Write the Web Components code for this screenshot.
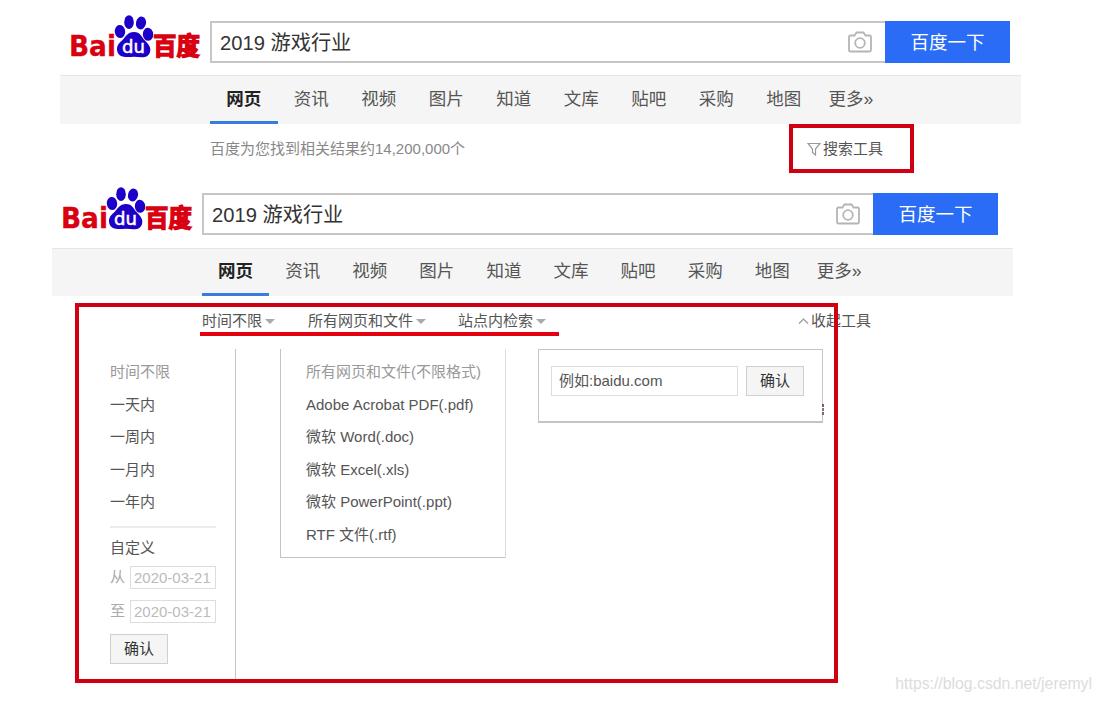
<!DOCTYPE html>
<html lang="zh-CN">
<head>
<meta charset="utf-8">
<title>2019 游戏行业_百度搜索</title>
<style>
  body {
    margin: 0;
    width: 1100px;
    height: 702px;
    overflow: hidden;
    position: relative;
    background: #fff;
    color: #555;
    font: 15px/20px "Liberation Sans", "Noto Sans CJK SC", sans-serif;
  }
  .first {
    height: 172px;
  }
  .panels {
    display: flex;
    align-items: flex-start;
    padding: 18px 0 0 110px;
  }
  mark-box, mark-line, water-mark, .stray {
    position: absolute;
  }
  .stray {
    left: 822px;
    top: 404px;
    width: 2px;
    height: 11px;
    background: linear-gradient(#765 3px, #fff 3px, #fff 4px, #779 4px, #779 7px, #fff 7px, #fff 8px, #865 8px);
  }
</style>
</head>
<body>
  <div class="first">
    <search-bar style="padding: 21px 0 0 70px" query="2019 游戏行业"></search-bar>
    <nav-tabs style="margin: 12px 0 0 60px"></nav-tabs>
    <result-info>
      百度为您找到相关结果约14,200,000个
      <tool-toggle slot="tool" icon="filter">搜索工具</tool-toggle>
    </result-info>
  </div>

  <search-bar style="padding: 21px 0 0 62px; --field: 671px" query="2019 游戏行业"></search-bar>
  <nav-tabs style="margin: 13px 0 0 52px; --height: 48px; --line: 45px; --tab: 67.1px"></nav-tabs>
  <filter-bar>
    <filter-item>时间不限</filter-item>
    <filter-item style="margin-left: 33px">所有网页和文件</filter-item>
    <filter-item style="margin-left: 32px">站点内检索</filter-item>
    <tool-toggle slot="tool" icon="up">收起工具</tool-toggle>
  </filter-bar>

  <div class="panels">
    <time-panel></time-panel>
    <file-panel></file-panel>
    <site-panel></site-panel>
  </div>

  <div class="stray"></div>
  <mark-box style="left: 789px; top: 124px; width: 125px; height: 49px"></mark-box>
  <mark-box style="left: 75px; top: 303px; width: 763px; height: 380px"></mark-box>
  <mark-line style="left: 200px; top: 332px; width: 359px"></mark-line>
  <water-mark>https://blog.csdn.net/jeremyl</water-mark>

<script>
class BaiduLogo extends HTMLElement {
  constructor() {
    super();
    this.attachShadow({ mode: "open" });
    this.shadowRoot.innerHTML = `
      <style>
      :host {
        display: block;
        width: 130px;
        height: 52px;
      }
      svg {
        display: block;
        overflow: visible;
      }
      text {
        font-family: "DejaVu Sans", "Noto Sans CJK SC", sans-serif;
        font-weight: bold;
      }
      </style>
      <svg width="130" height="52" viewBox="0 0 130 52">
        <g fill="#d9000f" stroke="#d9000f">
          <text x="-1" y="42" font-size="28" textLength="47" lengthAdjust="spacingAndGlyphs" stroke-width=".3">Bai</text>
          <text x="83" y="41.200" font-size="24.500" textLength="47" lengthAdjust="spacingAndGlyphs" stroke-width="1.300">百度</text>
        </g>
        <g fill="#1d00c8">
          <ellipse cx="50" cy="17.500" rx="5.200" ry="6.600" transform="rotate(-8 50 17.500)"/>
          <ellipse cx="59" cy="8.200" rx="4.800" ry="6.900"/>
          <ellipse cx="71" cy="9" rx="5" ry="6.500" transform="rotate(12 71 9)"/>
          <ellipse cx="78" cy="20.300" rx="5.200" ry="6.500" transform="rotate(-4 78 20.300)"/>
          <path d="M64 18C57.500 18 55.500 23 52 26.500C48 30 46 33 47.500 38C50 44.500 57 43 64 42.700C71 43 78 45 80 38C81.500 33 78 30 75 26.500C71.500 23 70.500 18 64 18Z"/>
        </g>
        <text x="52" y="39" font-size="18" textLength="23" lengthAdjust="spacingAndGlyphs" fill="#fff" stroke="#fff" stroke-width=".5" style="font-weight: normal">du</text>
      </svg>
    `;
  }
}

class SearchBar extends HTMLElement {
  constructor() {
    super();
    this.attachShadow({ mode: "open" });
    this.shadowRoot.innerHTML = `
      <style>
      :host {
        display: flex;
        height: 42px;
      }
      baidu-logo {
        margin: -7px 10px 0 0;
      }
      .field {
        box-sizing: border-box;
        width: var(--field, 675px);
        height: 42px;
        display: flex;
        align-items: center;
        justify-content: space-between;
        padding: 0 12px 0 8px;
        border: 2px solid #c6c6c6;
        border-right: 0;
        color: #333;
        font-size: 20.2px;
      }
      .field span {
        padding-top: 2px;
      }
      .button {
        width: 125px;
        height: 42px;
        line-height: 43px;
        background: #2a6cf5;
        color: #fff;
        font-size: 18.5px;
        text-align: center;
      }
      </style>
      <baidu-logo></baidu-logo>
      <div class="field">
        <span></span>
        <svg width="26" height="24" viewBox="0 0 26 24" fill="none" stroke="#b5b5b5" stroke-width="1.800">
          <path d="M3.500 5.500H7.500L9.500 2.500H16.500L18.500 5.500H22.500Q24 5.500 24 7V20Q24 21.500 22.500 21.500H3.500Q2 21.500 2 20V7Q2 5.500 3.500 5.500Z"/>
          <circle cx="13" cy="13" r="4.800"/>
        </svg>
      </div>
      <div class="button">百度一下</div>
    `;
  }

  connectedCallback() {
    this.shadowRoot.querySelector("span").innerText = this.getAttribute("query");
  }
}

class NavTabs extends HTMLElement {
  constructor() {
    super();
    this.attachShadow({ mode: "open" });
    const tabs = ["网页", "资讯", "视频", "图片", "知道", "文库", "贴吧", "采购", "地图"];
    this.shadowRoot.innerHTML = `
      <style>
      :host {
        display: flex;
        box-sizing: border-box;
        width: 961px;
        height: var(--height, 49px);
        padding-left: 150px;
        border-top: 1px solid #e6e6e6;
        background: #f5f5f5;
        font-size: 17.5px;
        line-height: var(--line, 46px);
      }
      div {
        box-sizing: border-box;
        width: var(--tab, 67.5px);
        text-align: center;
      }
      .active {
        border-bottom: 3px solid #3a7be0;
        color: #222;
        font-weight: bold;
      }
      .more {
        width: auto;
        margin-left: 11px;
      }
      </style>
      ${tabs.map((t, i) => `<div class="${i === 0 ? "active" : ""}">${t}</div>`).join("")}
      <div class="more">更多»</div>
    `;
  }
}

class ResultInfo extends HTMLElement {
  constructor() {
    super();
    this.attachShadow({ mode: "open" });
    this.shadowRoot.innerHTML = `
      <style>
      :host {
        display: flex;
        justify-content: space-between;
        width: 673px;
        margin: 15px 0 0 210px;
        color: #888;
      }
      </style>
      <span><slot></slot></span>
      <slot name="tool"></slot>
    `;
  }
}

class ToolToggle extends HTMLElement {
  constructor() {
    super();
    this.attachShadow({ mode: "open" });
    this.icons = {
      filter: `<svg width="14" height="14" viewBox="0 0 14 14"><path d="M1 1.500H13L8.500 7V13L5.500 10.500V7Z"/></svg>`,
      up: `<svg width="11" height="8" viewBox="0 0 11 8"><path d="M1 6.500L5.500 2L10 6.500"/></svg>`
    };
    this.shadowRoot.innerHTML = `
      <style>
      :host {
        display: flex;
        align-items: center;
        gap: 2px;
        color: #555;
      }
      svg {
        fill: none;
        stroke: #999;
        stroke-width: 1.2;
      }
      </style>
      <i style="display: contents"></i>
      <span><slot></slot></span>
    `;
  }

  connectedCallback() {
    this.shadowRoot.querySelector("i").innerHTML = this.icons[this.getAttribute("icon")];
  }
}

class FilterBar extends HTMLElement {
  constructor() {
    super();
    this.attachShadow({ mode: "open" });
    this.shadowRoot.innerHTML = `
      <style>
      :host {
        display: flex;
        width: 669px;
        margin: 15px 0 0 202px;
      }
      slot[name="tool"] {
        display: block;
        margin-left: auto;
      }
      </style>
      <slot></slot>
      <slot name="tool"></slot>
    `;
  }
}

class FilterItem extends HTMLElement {
  constructor() {
    super();
    this.attachShadow({ mode: "open" });
    this.shadowRoot.innerHTML = `
      <style>
      :host {
        display: flex;
        align-items: center;
        gap: 3px;
      }
      i {
        border: 5px solid transparent;
        border-top-color: #aaa;
        border-bottom: 0;
      }
      </style>
      <slot></slot><i></i>
    `;
  }
}

class OkButton extends HTMLElement {
  constructor() {
    super();
    this.attachShadow({ mode: "open" });
    this.shadowRoot.innerHTML = `
      <style>
      :host {
        display: block;
        box-sizing: border-box;
        width: 58px;
        height: 30px;
        border: 1px solid #d0d0d0;
        background: #f5f5f5;
        color: #333;
        line-height: 28px;
        text-align: center;
      }
      </style>
      <slot>确认</slot>
    `;
  }
}

class TimePanel extends HTMLElement {
  constructor() {
    super();
    this.attachShadow({ mode: "open" });
    this.shadowRoot.innerHTML = `
      <style>
      :host {
        display: block;
        box-sizing: border-box;
        width: 126px;
        height: 330px;
        padding: 7px 19px 0 0;
        border-right: 1px solid #c4c4c4;
      }
      .item {
        line-height: 32.6px;
      }
      .off {
        color: #999;
      }
      hr {
        margin: 7px 0 10px;
        border: 0;
        border-top: 2px solid #ececec;
      }
      .date {
        display: flex;
        align-items: center;
        justify-content: space-between;
        height: 23px;
        margin-bottom: 11px;
        color: #aaa;
      }
      .date span {
        box-sizing: border-box;
        width: 86px;
        height: 23px;
        padding-left: 3px;
        border: 1px solid #ddd;
        color: #bbb;
        line-height: 21px;
      }
      </style>
      <div class="item off">时间不限</div>
      <div class="item">一天内</div>
      <div class="item">一周内</div>
      <div class="item">一月内</div>
      <div class="item">一年内</div>
      <hr>
      <div style="margin-bottom: 8px">自定义</div>
      <div class="date">从<span>2020-03-21</span></div>
      <div class="date">至<span>2020-03-21</span></div>
      <ok-button></ok-button>
    `;
  }
}

class FilePanel extends HTMLElement {
  constructor() {
    super();
    this.attachShadow({ mode: "open" });
    this.shadowRoot.innerHTML = `
      <style>
      :host {
        display: block;
        box-sizing: border-box;
        width: 226px;
        height: 209px;
        margin-left: 44px;
        padding: 7px 0 0 25px;
        border: 1px solid #c4c4c4;
        border-top: 0;
        border-right-color: #ddd;
        line-height: 32.6px;
      }
      .off {
        color: #999;
      }
      </style>
      <div class="off">所有网页和文件(不限格式)</div>
      <div>Adobe Acrobat PDF(.pdf)</div>
      <div>微软 Word(.doc)</div>
      <div>微软 Excel(.xls)</div>
      <div>微软 PowerPoint(.ppt)</div>
      <div>RTF 文件(.rtf)</div>
    `;
  }
}

class SitePanel extends HTMLElement {
  constructor() {
    super();
    this.attachShadow({ mode: "open" });
    this.shadowRoot.innerHTML = `
      <style>
      :host {
        display: flex;
        gap: 8px;
        box-sizing: border-box;
        width: 285px;
        height: 74px;
        margin-left: 32px;
        padding: 16px 0 0 12px;
        border: 1px solid #c4c4c4;
        border-bottom-width: 2px;
      }
      .input {
        box-sizing: border-box;
        width: 187px;
        height: 30px;
        padding-left: 7px;
        border: 1px solid #ddd;
        line-height: 28px;
      }
      </style>
      <div class="input">例如:baidu.com</div>
      <ok-button></ok-button>
    `;
  }
}

class MarkBox extends HTMLElement {
  constructor() {
    super();
    this.attachShadow({ mode: "open" });
    this.shadowRoot.innerHTML = `
      <style>
      :host {
        display: block;
        box-sizing: border-box;
        border: 4px solid #cf0012;
      }
      </style>
    `;
  }
}

class MarkLine extends HTMLElement {
  constructor() {
    super();
    this.attachShadow({ mode: "open" });
    this.shadowRoot.innerHTML = `
      <style>
      :host {
        display: block;
        height: 4px;
        background: #e3000f;
      }
      </style>
    `;
  }
}

class WaterMark extends HTMLElement {
  constructor() {
    super();
    this.attachShadow({ mode: "open" });
    this.shadowRoot.innerHTML = `
      <style>
      :host {
        display: block;
        right: 8px;
        bottom: 8px;
        color: #dcdcdc;
        font-size: 15.8px;
      }
      </style>
      <slot></slot>
    `;
  }
}

customElements.define("baidu-logo", BaiduLogo);
customElements.define("search-bar", SearchBar);
customElements.define("nav-tabs", NavTabs);
customElements.define("result-info", ResultInfo);
customElements.define("tool-toggle", ToolToggle);
customElements.define("filter-bar", FilterBar);
customElements.define("filter-item", FilterItem);
customElements.define("ok-button", OkButton);
customElements.define("time-panel", TimePanel);
customElements.define("file-panel", FilePanel);
customElements.define("site-panel", SitePanel);
customElements.define("mark-box", MarkBox);
customElements.define("mark-line", MarkLine);
customElements.define("water-mark", WaterMark);
</script>
</body>
</html>
